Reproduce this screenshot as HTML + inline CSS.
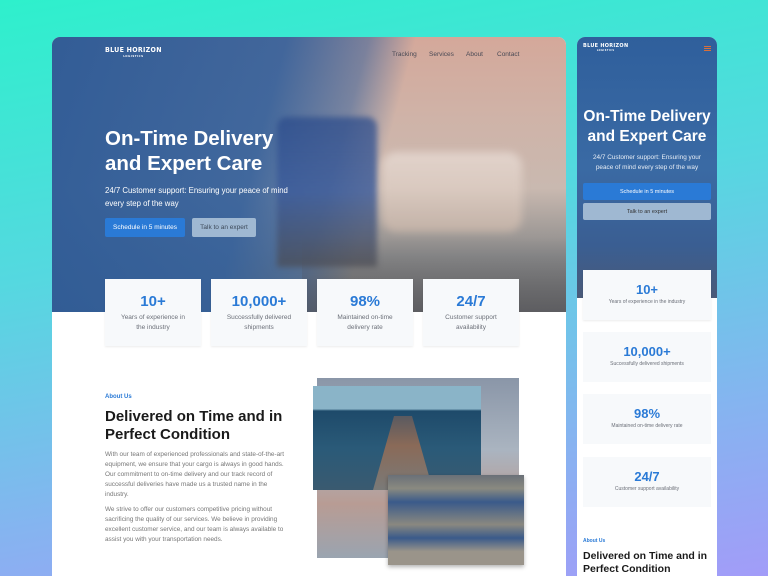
<!DOCTYPE html>
<html style="background:#7fb8ee"><head><meta charset="utf-8"><style>
*{margin:0;padding:0;box-sizing:border-box}
html,body{width:768px;height:576px;overflow:hidden}
body{position:relative;font-family:"Liberation Sans",sans-serif;background:linear-gradient(170deg,#2ef0cc 0%,#55d8e0 40%,#85b4f0 75%,#a29cf8 100%)}
.abs{position:absolute}
.frame{position:absolute;background:#fff;border-radius:8px 8px 0 0;overflow:hidden}
.hero{position:absolute;left:0;top:0;width:100%;overflow:hidden}
.logo{position:absolute;color:#fff;font-weight:bold;letter-spacing:.3px;font-family:"DejaVu Sans Condensed","Liberation Sans",sans-serif}
.logo small{display:block;font-size:3px;text-align:center;letter-spacing:.5px}
.nav{position:absolute;font-size:6.5px;color:#4a4a55}
.h1{color:#fff;font-weight:bold}
.btn{position:absolute;font-size:6.5px;display:flex;align-items:center;justify-content:center;border-radius:2px}
.card{position:absolute;background:#f7f9fb;box-shadow:0 1px 2px rgba(0,0,0,.08);text-align:center}
.num{color:#2a7ad6;font-weight:bold}
.lbl{color:#6b6f78}
p.t{font-size:6.4px;line-height:10px;color:#777}
</style></head><body>

<!-- DESKTOP -->
<div class="frame" style="left:52px;top:37px;width:514px;height:539px">
 <div class="hero" style="height:275px;background:
   linear-gradient(105deg,rgba(45,90,150,.97) 0%,rgba(50,95,155,.9) 40%,rgba(50,95,155,.55) 54%,rgba(0,0,0,0) 62%),
   linear-gradient(180deg,#d4a89a 0%,#cfb3a8 30%,#c9b9b0 55%,#8a8a8a 80%,#6b6b68 100%)">
  <div class="abs" style="left:225px;top:80px;width:100px;height:150px;background:linear-gradient(180deg,rgba(42,74,138,.7),rgba(58,90,154,.8) 50%,rgba(74,74,80,.7));border-radius:10px 10px 0 0;filter:blur(3px)"></div>
  <div class="abs" style="left:330px;top:115px;width:140px;height:80px;background:linear-gradient(180deg,#f0e6e0,#d8c0b0);opacity:.6;border-radius:14px;filter:blur(4px)"></div>
  <div class="abs" style="left:250px;top:200px;width:270px;height:75px;background:linear-gradient(180deg,rgba(80,80,90,0),rgba(80,80,90,.5));"></div>
 </div>
 <div class="logo" style="left:53px;top:9px;font-size:7px">BLUE HORIZON<small>LOGISTICS</small></div>
 <div class="nav" style="left:340px;top:14px">Tracking</div>
 <div class="nav" style="left:377px;top:14px">Services</div>
 <div class="nav" style="left:414px;top:14px">About</div>
 <div class="nav" style="left:445px;top:14px">Contact</div>
 <div class="abs h1" style="left:53px;top:89px;font-size:20.5px;line-height:25px">On-Time Delivery<br>and Expert Care</div>
 <div class="abs" style="left:53px;top:147px;font-size:7.8px;line-height:13px;color:#fff">24/7 Customer support: Ensuring your peace of mind<br>every step of the way</div>
 <div class="btn" style="left:53px;top:181px;width:80px;height:19px;background:#2a7ad6;color:#fff">Schedule in 5 minutes</div>
 <div class="btn" style="left:140px;top:181px;width:64px;height:19px;background:#9fb8d2;color:#3d4a5a">Talk to an expert</div>

 <div class="card" style="left:53px;top:242px;width:96px;height:67px"><div class="num" style="font-size:15px;margin-top:14px">10+</div><div class="lbl" style="font-size:6.5px;line-height:10px;margin-top:3px">Years of experience in<br>the industry</div></div>
 <div class="card" style="left:159px;top:242px;width:96px;height:67px"><div class="num" style="font-size:15px;margin-top:14px">10,000+</div><div class="lbl" style="font-size:6.5px;line-height:10px;margin-top:3px">Successfully delivered<br>shipments</div></div>
 <div class="card" style="left:265px;top:242px;width:96px;height:67px"><div class="num" style="font-size:15px;margin-top:14px">98%</div><div class="lbl" style="font-size:6.5px;line-height:10px;margin-top:3px">Maintained on-time<br>delivery rate</div></div>
 <div class="card" style="left:371px;top:242px;width:96px;height:67px"><div class="num" style="font-size:15px;margin-top:14px">24/7</div><div class="lbl" style="font-size:6.5px;line-height:10px;margin-top:3px">Customer support<br>availability</div></div>

 <div class="abs" style="left:53px;top:357px;font-size:6px;font-weight:bold;color:#2a7ad6">About Us</div>
 <div class="abs" style="left:53px;top:371px;font-size:15px;line-height:18px;font-weight:bold;color:#1a1a1a">Delivered on Time and in<br>Perfect Condition</div>
 <p class="abs t" style="left:53px;top:413px;width:180px">With our team of experienced professionals and state-of-the-art equipment, we ensure that your cargo is always in good hands. Our commitment to on-time delivery and our track record of successful deliveries have made us a trusted name in the industry.</p>
 <p class="abs t" style="left:53px;top:468px;width:180px">We strive to offer our customers competitive pricing without sacrificing the quality of our services. We believe in providing excellent customer service, and our team is always available to assist you with your transportation needs.</p>

 <div class="abs" style="left:265px;top:341px;width:202px;height:180px;background:linear-gradient(180deg,#8a96a8 0%,#aab4c0 40%,#b89c94 70%,#9aa4b0 100%)"></div>
 <div class="abs" style="left:261px;top:349px;width:168px;height:104px;background:linear-gradient(180deg,#8ab4c8 0%,#8ab4c8 22%,#1e4a6a 24%,#2a5a78 60%,#3a5a70 100%)">
  <div class="abs" style="left:60px;top:30px;width:60px;height:74px;background:linear-gradient(180deg,#5a5a60,#8a6a58 40%,#7a7a78);clip-path:polygon(35% 0,65% 0,100% 100%,0 100%)"></div>
 </div>
 <div class="abs" style="left:336px;top:438px;width:136px;height:90px;background:linear-gradient(180deg,#6a7078 0%,#8a8a80 15%,#3a5a8a 30%,#8a8880 55%,#3a5a8a 70%,#9a948a 85%);box-shadow:0 2px 4px rgba(0,0,0,.3)"></div>
</div>

<!-- MOBILE -->
<div class="frame" style="left:577px;top:37px;width:140px;height:539px">
 <div class="hero" style="height:261px;background:linear-gradient(180deg,#2f5f9c 0%,#3a6aa4 50%,#3a5e92 80%,#4a5a78 100%)"></div>
 <div class="logo" style="left:6px;top:6px;font-size:5.5px">BLUE HORIZON<small style="font-size:2.5px">LOGISTICS</small></div>
 <div class="abs" style="left:127px;top:9px;width:7px;height:5px;border-top:1px solid #d8703a;border-bottom:1px solid #d8703a"><div style="margin-top:1px;height:1px;background:#d8703a"></div></div>
 <div class="abs h1" style="left:0;width:140px;text-align:center;top:70px;font-size:15.5px;line-height:19.5px">On-Time Delivery<br>and Expert Care</div>
 <div class="abs" style="left:0;width:140px;text-align:center;top:116px;font-size:6.4px;line-height:10px;color:#e8eef6">24/7 Customer support: Ensuring your<br>peace of mind every step of the way</div>
 <div class="btn" style="left:6px;top:146px;width:128px;height:17px;background:#2a7ad6;color:#fff;font-size:5.5px">Schedule in 5 minutes</div>
 <div class="btn" style="left:6px;top:166px;width:128px;height:17px;background:#9fb8d2;color:#333;font-size:5.5px">Talk to an expert</div>
 <div class="card" style="left:6px;top:233px;width:128px;height:50px"><div class="num" style="font-size:13px;margin-top:12px">10+</div><div class="lbl" style="font-size:5px;margin-top:2px">Years of experience in the industry</div></div>
 <div class="card" style="left:6px;top:295px;width:128px;height:50px;box-shadow:none"><div class="num" style="font-size:13px;margin-top:12px">10,000+</div><div class="lbl" style="font-size:5px;margin-top:2px">Successfully delivered shipments</div></div>
 <div class="card" style="left:6px;top:357px;width:128px;height:50px;box-shadow:none"><div class="num" style="font-size:13px;margin-top:12px">98%</div><div class="lbl" style="font-size:5px;margin-top:2px">Maintained on-time delivery rate</div></div>
 <div class="card" style="left:6px;top:420px;width:128px;height:50px;box-shadow:none"><div class="num" style="font-size:13px;margin-top:12px">24/7</div><div class="lbl" style="font-size:5px;margin-top:2px">Customer support availability</div></div>
 <div class="abs" style="left:6px;top:501px;font-size:5px;font-weight:bold;color:#2a7ad6">About Us</div>
 <div class="abs" style="left:6px;top:513px;font-size:10.5px;line-height:13px;font-weight:bold;color:#1a1a1a">Delivered on Time and in<br>Perfect Condition</div>
</div>
</body></html>
